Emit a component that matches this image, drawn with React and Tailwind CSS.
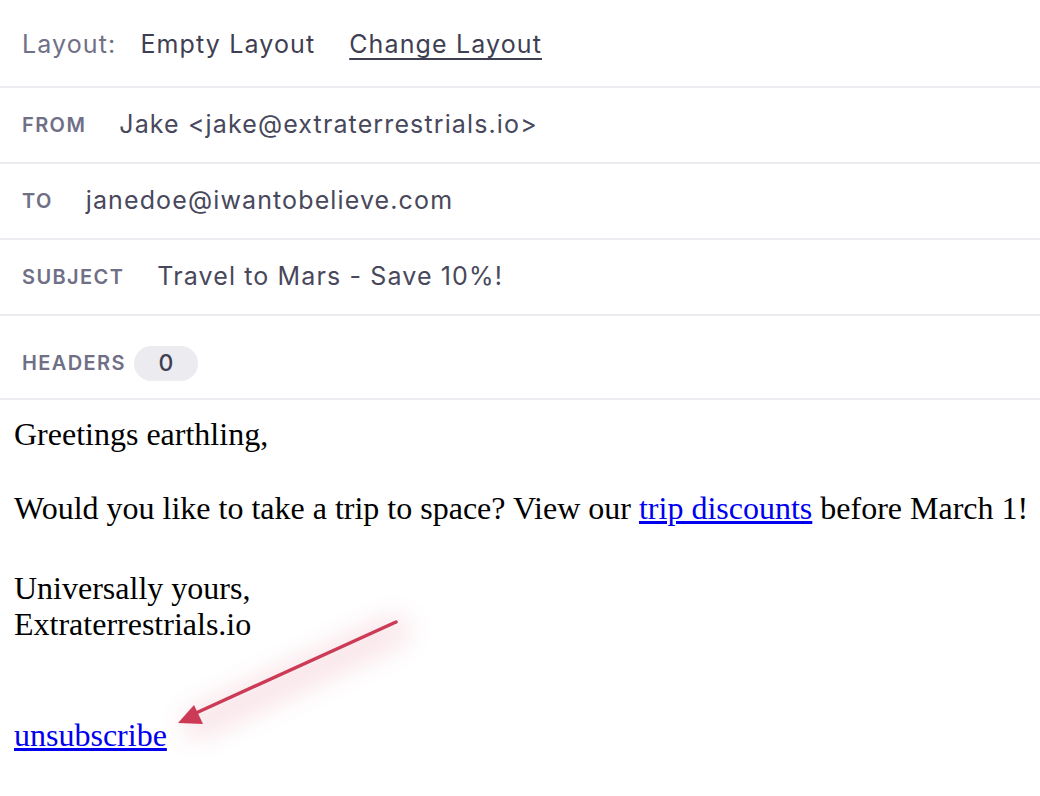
import React from "react";

const sans = { fontFamily: "Inter, 'Noto Sans', sans-serif" };

function Field({ label, children }) {
  return (
    <div className="flex h-[76px] items-center border-b-2 border-[#ececf1] px-[22px]">
      <span className="text-[20px] font-semibold uppercase tracking-[0.07em] text-[#6f6f86]">{label}</span>
      <span className="ml-[33px] text-[25px] tracking-[0.045em] text-[#48485c]">{children}</span>
    </div>
  );
}

export default function App() {
  return (
    <div className="relative min-h-[796px] w-[1040px] overflow-hidden bg-white">
      <div style={sans}>
        {/* layout selector */}
        <div className="flex h-[88px] items-center border-b-2 border-[#ececf1] px-[22px] pt-[4px] text-[25px] tracking-[0.045em]">
          <span className="text-[#707087]">Layout:</span>
          <span className="ml-[24px] text-[#3f3f53]">Empty Layout</span>
          <a href="#" className="ml-[34px] text-[#3f3f53] underline decoration-[1.5px] underline-offset-[5px]">
            Change Layout
          </a>
        </div>

        <Field label="From">Jake &lt;jake@extraterrestrials.io&gt;</Field>
        <Field label="To">janedoe@iwantobelieve.com</Field>
        <Field label="Subject">Travel to Mars - Save 10%!</Field>

        <div className="flex h-[84px] items-start border-b-2 border-[#ececf1] px-[22px] pt-[30px]">
          <span className="text-[20px] font-semibold uppercase tracking-[0.07em] leading-[35px] text-[#6f6f86]">Headers</span>
          <span className="ml-2 flex h-[35px] w-[64px] items-center justify-center rounded-full bg-[#ebebf0] text-[23px] font-medium text-[#3f3f53]">
            0
          </span>
        </div>
      </div>

      {/* email body */}
      <div
        className="whitespace-nowrap pl-[14px] pt-4 text-[32px] leading-[1.15] text-black"
        style={{ fontFamily: "'Liberation Serif', 'Times New Roman', serif" }}
      >
        <div className="mb-[37px]">Greetings earthling,</div>
        <div className="mb-[43px]">
          Would you like to take a trip to space? View our{" "}
          <a href="#" className="text-[#0000ee] underline">trip discounts</a> before March 1!
        </div>
        <div>Universally yours,</div>
        <div className="mb-[74px]">Extraterrestrials.io</div>
        <a href="#" className="text-[#0000ee] underline">unsubscribe</a>
      </div>

      {/* annotation arrow */}
      <svg
        className="pointer-events-none absolute left-0 top-0"
        width="1040"
        height="796"
        viewBox="0 0 1040 796"
      >
        <defs>
          <filter id="glow" x="-50%" y="-50%" width="200%" height="200%">
            <feGaussianBlur stdDeviation="14" />
          </filter>
        </defs>
        <g filter="url(#glow)" opacity="0.16">
          <line x1="396" y1="630" x2="196" y2="724" stroke="#d23a5a" strokeWidth="26" strokeLinecap="round" />
        </g>
        <line x1="396" y1="622" x2="196" y2="713" stroke="#cc3a56" strokeWidth="3.5" strokeLinecap="round" />
        <polygon points="178,723 194,705 203,724" fill="#cc3a56" />
      </svg>
    </div>
  );
}
